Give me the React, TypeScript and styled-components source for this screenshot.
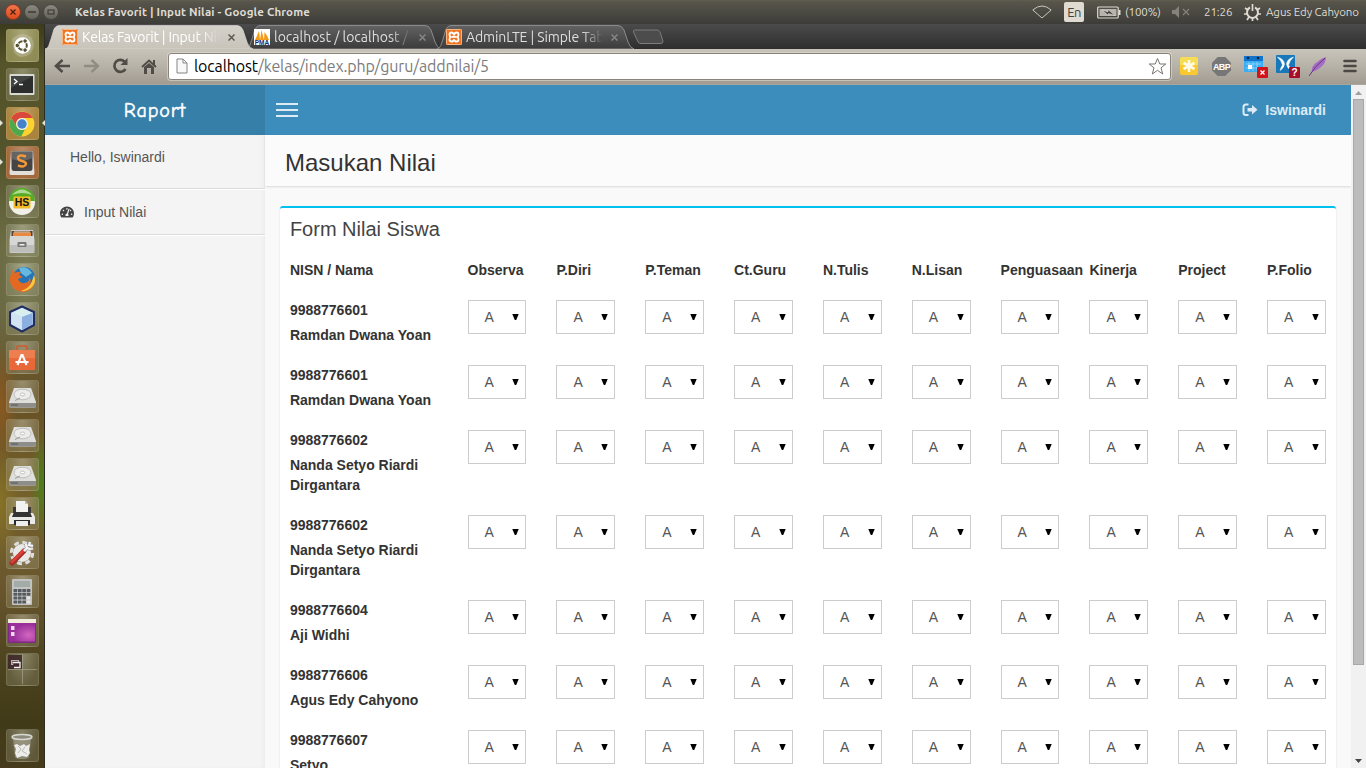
import React from "react";
import styled, { createGlobalStyle, css } from "styled-components";
import { FaTachometerAlt } from "react-icons/fa";

const GlobalStyle = createGlobalStyle`
  * { box-sizing: border-box; }
  body { margin: 0; overflow: hidden; font-family: "Liberation Sans", Arial, sans-serif; font-size: 14px; line-height: 20px; color: #333; }
  svg { display: block; flex: none; }
`;

const uiFont = css`font-family: Ubuntu, "Noto Sans", "Open Sans", sans-serif;`;

const Desktop = styled.div`
  width: 1366px; height: 768px; overflow: hidden;
  display: flex; flex-direction: column;
`;

/* ---------- system panel ---------- */
const Panel = styled.header`
  ${uiFont}
  flex: none; height: 24px; display: flex; align-items: center; padding-left: 5px;
  background: linear-gradient(#605e50 0, #57554b 2px, #3d3c38 24px);
  color: #dfdbd2; font-size: 12px;
`;
const WindowButton = styled.span<{ $close?: boolean }>`
  width: 16px; height: 16px; margin-right: 3px; border-radius: 50%;
  display: grid; place-items: center;
  border: 1px solid ${p => (p.$close ? "#8f3b20" : "#494841")};
  background: ${p => (p.$close ? "linear-gradient(#f4764d,#df4a1c)" : "linear-gradient(#8b897f,#64625a)")};
`;
const WindowTitle = styled.span`
  margin-left: 13px; font-weight: 700; font-size: 11.5px; letter-spacing: 0.16px; white-space: nowrap; flex: 1;
`;
const Tray = styled.div`display: flex; align-items: center; white-space: nowrap;`;
const Lang = styled.span`
  width: 20px; height: 20px; margin: 0 13px 0 12px; border-radius: 2px; background: #dfdbd2; color: #43423d;
  font-size: 13px; line-height: 21px; text-align: center; letter-spacing: -0.6px;
`;
const TrayText = styled.span<{ $w: number; $ml: number }>`
  width: ${p => p.$w}px; margin-left: ${p => p.$ml}px; font-size: 11.5px; letter-spacing: -0.1px;
`;

/* ---------- launcher ---------- */
const Body = styled.div`flex: 1; min-height: 0; display: flex;`;
const Launcher = styled.nav`
  flex: none; width: 45px; padding: 5px 0 6px 5.5px; display: flex; flex-direction: column; gap: 6px;
  border-right: 1px solid #2c2c20;
  background:
    radial-gradient(ellipse 14px 55px at 100% 460px, rgba(62,140,20,.75), transparent),
    radial-gradient(ellipse 18px 60px at 0 380px, rgba(150,92,32,.75), transparent),
    radial-gradient(ellipse 20px 60px at 0 480px, rgba(139,118,38,.8), transparent),
    radial-gradient(ellipse 24px 70px at 60% 250px, rgba(134,136,96,.7), transparent),
    linear-gradient(#3c3b1c 0, #565429 40px, #53532c 130px, #6c6c45 220px, #6b6a44 290px, #665025 370px, #74602a 470px, #6b572e 560px, #4c431f 640px, #413a18 700px, #463b1b);
`;
const Tile = styled.div<{ $tint?: string; $left?: boolean; $right?: boolean }>`
  position: relative; flex: none; width: 33px; height: 33px; border-radius: 3px; display: grid; place-items: center;
  border: 1px solid rgba(225,225,190,.13);
  background: radial-gradient(ellipse at 50% 0, rgba(255,255,245,.28), rgba(255,255,245,.06) 75%), ${p => p.$tint || "rgba(150,148,120,.22)"};
  ${p => p.$left && css`&::before { content: ""; position: absolute; left: -7px; top: 12px; border: 3px solid transparent; border-left-color: #e3e3dc; border-right: 0; }`}
  ${p => p.$right && css`&::after { content: ""; position: absolute; right: -7px; top: 12px; border: 3px solid transparent; border-right-color: #e3e3dc; border-left: 0; }`}
`;
const Spacer = styled.div`flex: 1;`;

/* ---------- browser ---------- */
const Browser = styled.main`flex: 1; min-width: 0; display: flex; flex-direction: column;`;
const TabStrip = styled.div`
  ${uiFont}
  flex: none; height: 25px; display: flex; align-items: flex-end; background: linear-gradient(#4b4b4b, #2e2e2e);
`;
const Tab = styled.div<{ $w: number; $active?: boolean; $pad: number; $end: number; $ml?: number }>`
  position: relative; z-index: ${p => (p.$active ? 2 : 1)};
  width: ${p => p.$w}px; height: 25px; margin-left: ${p => p.$ml || 0}px; padding: 1px ${p => p.$end}px 0 ${p => p.$pad}px;
  display: flex; align-items: center; color: ${p => (p.$active ? "#fff" : "#dedede")};
`;
const TabShape = styled.svg`position: absolute; left: 0; top: 0; z-index: -1;`;
const TabTitle = styled.span<{ $ls: number }>`
  flex: 1; min-width: 0; margin-left: 4px; margin-right: 8px; overflow: hidden; white-space: nowrap;
  font-size: 14px; line-height: 22px; letter-spacing: ${p => p.$ls}px;
  -webkit-mask-image: linear-gradient(90deg, #000 85%, transparent 100%);
  mask-image: linear-gradient(90deg, #000 85%, transparent 100%);
`;
const NewTab = styled.svg`margin-left: -2px;`;
const Toolbar = styled.div`
  ${uiFont}
  flex: none; height: 36px; display: flex; align-items: center; padding: 0 8px 1px 9px;
  background: linear-gradient(#c8c4ba, #b7b2a8 50%, #a19b91); border-bottom: 1px solid #aaa69d;
`;
const NavIcons = styled.div`display: flex; align-items: center; gap: 12px; width: 114px;`;
const UrlBox = styled.div`
  width: 1003px; height: 27px; display: flex; align-items: center; padding: 0 3px 0 7px;
  background: #fff; border: 1px solid #88847c; border-radius: 3px; box-shadow: 0 0 0 1px rgba(225,222,214,.55);
`;
const Url = styled.span`
  flex: 1; margin-left: 6px; font-size: 16px; line-height: 24px; letter-spacing: -0.13px; color: #7c7c7c;
  b { font-weight: 400; color: #000; }
`;
const Extensions = styled.div`display: flex; align-items: center; margin-left: 9px;`;
const Extension = styled.span<{ $w: number }>`width: ${p => p.$w}px; flex: none;`;

/* ---------- page ---------- */
const Viewport = styled.div`flex: 1; min-height: 0; display: flex; background: #f9f9f9;`;
const Page = styled.div`flex: 1; min-width: 0; display: flex; flex-direction: column; overflow: hidden;`;
const TopNav = styled.div`flex: none; height: 50px; display: flex; background: #3c8dbc;`;
const Brand = styled.div`
  width: 220px; background: #367fa9; color: #fff; text-align: center; line-height: 52px; font-size: 20px;
  font-family: Kaushan, "Comic Neue", "Comic Sans MS", cursive;
  span { letter-spacing: .9px; -webkit-text-stroke: .5px #fff; }
`;
const Burger = styled.div`
  width: 22px; margin: 18px 0 0 11px; height: 14px; display: flex; flex-direction: column; justify-content: space-between;
  i { height: 2px; background: #dcebf4; }
`;
const User = styled.div`
  margin-left: auto; margin-right: 25px; display: flex; align-items: center; gap: 7px;
  color: #dcebf4; font-weight: 700;
`;
const Columns = styled.div`flex: 1; min-height: 0; display: flex;`;
const Sidebar = styled.aside`
  flex: none; width: 220px; background: #f4f4f4; color: #555; box-shadow: inset -3px 0 6px -3px rgba(0,0,0,.06);
`;
const Hello = styled.div`height: 54px; padding: 12px 25px; border-bottom: 1px solid #dbdbdb;`;
const MenuItem = styled.div`
  height: 46px; border-top: 1px solid #fff; border-bottom: 1px solid #dbdbdb; box-shadow: 0 1px 0 #fff;
  display: flex; align-items: center; padding: 0 0 1px 15px; gap: 10px; svg { color: #444; }
`;
const Content = styled.section`flex: 1; min-width: 0;`;
const ContentHeader = styled.h1`
  margin: 0; height: 51px; padding: 15px 20px; background: #fbfbfb; color: #333;
  font-size: 24px; line-height: 26px; font-weight: 400; box-shadow: 0 1px 2px rgba(0,0,0,.13);
`;
const Card = styled.div`
  margin: 20px 15px 0 14.5px; height: 900px; padding: 0 10.1px 0 10.4px; background: #fff; border-radius: 3px;
  border-top: 2px solid #00c0ef; box-shadow: 0 1px 2px rgba(0,0,0,.12);
`;
const CardTitle = styled.h3`margin: 0; padding: 10px 0; font-size: 20px; line-height: 22px; font-weight: 400; color: #444; height: 52px;`;
const Row = styled.div`
  display: grid; grid-template-columns: 2fr repeat(10, 1fr); margin: 0 -15px 15px; font-weight: 700;
`;
const Cell = styled.div`padding: 0 15px; min-width: 0; white-space: nowrap;`;
const NameCell = styled.div`padding: 0 15px;`;
const Label = styled.div`margin-bottom: 5px;`;
const Select = styled.div`
  height: 34px; border: 1px solid #ccc; background: #fff; color: #555; font-weight: 400;
  display: flex; align-items: center; justify-content: space-between; padding: 0 6px 0 16px;
`;
const Scrollbar = styled.div`
  flex: none; width: 15px; background: #f1f1f1; display: flex; flex-direction: column; align-items: center; justify-content: space-between; padding: 6px 0 5px;
`;
const Thumb = styled.div`width: 11px; height: 566px; background: #bcbcbc; border: 1px solid #a8a8a8; margin: 4px 0 auto;`;

const Ubuntu = () => (
  <svg width="27" height="27" viewBox="0 0 27 27">
    <path d="M3 7Q13-2 22 5Q28 13 21 22Q11 29 5 20" fill="#fff" opacity=".2" />
    <circle cx="13.5" cy="13.5" r="8.3" fill="#fff" />
    <circle cx="13.5" cy="13.5" r="4.3" fill="none" stroke="#54502d" strokeWidth="2" />
    {[60, 180, 300].map(a => (
      <g key={a} transform={`rotate(${a} 13.5 13.5)`}>
        <circle cx="18.7" cy="13.5" r="2.2" fill="#54502d" stroke="#fff" strokeWidth=".9" />
      </g>
    ))}
  </svg>
);
const Terminal = () => (
  <svg width="26" height="23" viewBox="0 0 26 23">
    <rect x=".5" y="1" width="25" height="21" rx="1" fill="#d8d8d4" />
    <rect x="2" y="3" width="22" height="17" fill="#2c2d2d" />
    <path d="M2 3H24L2 15Z" fill="#555" opacity=".55" />
    <path d="M5 6l3 2.5L5 11M10 11.5h4" fill="none" stroke="#fff" strokeWidth="1.3" />
  </svg>
);
const Chrome = () => (
  <svg width="26" height="26" viewBox="0 0 26 26">
    <circle cx="13" cy="13" r="12.4" fill="#fbd22f" />
    <path d="M2.3 6.8A12.4 12.4 0 0 1 23.8 7H13A6 6 0 0 0 7.8 16Z" fill="#d9483b" />
    <path d="M2.3 6.8L7.8 16A6 6 0 0 0 16 18.2L12.2 25.4A12.4 12.4 0 0 1 2.3 6.8Z" fill="#4fa84c" />
    <circle cx="13" cy="13" r="5.9" fill="#eef2f4" /><circle cx="13" cy="13" r="4.7" fill="#4682cc" />
  </svg>
);
const Sublime = () => (
  <svg width="26" height="26" viewBox="0 0 26 26">
    <path d="M2 2Q2 1 3 1H23Q24 1 24 2L25.5 23Q25.5 25 24 25H2Q.5 25 .5 23Z" fill="#e2dfda" />
    <path d="M2.5 1.5H23.5V18Q23.5 21 21 21H5Q2.5 21 2.5 18Z" fill="#444" />
    <path d="M2.5 1.5H23.5V8Q14 13 2.5 9Z" fill="#777" opacity=".65" />
    <path d="M17 6.5Q9 4 9 8Q9 10 13 11Q17 12 17 14Q16 18 9 15.5" fill="none" stroke="#f49838" strokeWidth="2.5" />
  </svg>
);
const Heidi = () => (
  <svg width="28" height="28" viewBox="0 0 28 28">
    <circle cx="14" cy="14" r="13" fill="#f0f0e9" />
    <path d="M1 13A13 13 0 0 1 27 13Z" fill="#55ad26" />
    <path d="M4 7Q14-4 24 7Q14 3 4 7Z" fill="#d5ecc5" opacity=".7" />
    <rect x="5.5" y="8.5" width="17" height="12" rx="1" fill="#f3ba29" />
    <text x="14" y="18.2" textAnchor="middle" fontFamily="Liberation Sans" fontWeight="700" fontSize="10.5" fill="#151515">HS</text>
  </svg>
);
const Files = () => (
  <svg width="26" height="26" viewBox="0 0 26 26">
    <path d="M2 2H24L25.5 12V24Q25.5 25 24 25H2Q.5 25 .5 24V12Z" fill="#c9c9c7" />
    <rect x="2.5" y="3" width="21" height="5" fill="#5b4230" /><path d="M4 4.5H22V8H4Z" fill="#e9893f" /><path d="M5 4H21" stroke="#f7dfc4" />
    <path d="M1 8H25V24H1Z" fill="#d6d6d4" /><path d="M1 17H25V24H1Z" fill="#bdbdbb" />
    <rect x="8.5" y="14" width="9" height="5" rx="1" fill="#777" /><rect x="10.5" y="16" width="5" height="1.5" fill="#eee" />
  </svg>
);
const Firefox = () => (
  <svg width="27" height="27" viewBox="0 0 27 27">
    <circle cx="15" cy="12" r="11" fill="#2474b6" /><path d="M10 2Q18-1 23 7L17 11L12 7Z" fill="#66b8df" />
    <path d="M3 4L6 7Q9 5 12 6L10 9L14 11L9 13Q11 18 16 17Q21 16 20 11Q23 14 21 18Q25 15 25 9Q28 17 23 22Q17 28 9 25Q0 21 1 12Z" fill="#e36822" />
    <path d="M25 9Q28 17 22 22Q16 26 12 25Q21 22 23 15Z" fill="#f8c63f" />
  </svg>
);
const Cube = () => (
  <svg width="28" height="28" viewBox="0 0 28 28">
    <path d="M14 1.5L26 7V20L14 26.5L2 20V7Z" fill="#b8d4ec" stroke="#222d62" strokeWidth="2" strokeLinejoin="round" />
    <path d="M3.5 8L14 3L24.5 8L14 12Z" fill="#d9eeef" /><path d="M14 12L24.5 8V19L14 25Z" fill="#8aafe0" />
    <path d="M3.5 8L14 12V25L3.5 19Z" fill="#d3e3f3" />
  </svg>
);
const Software = () => (
  <svg width="28" height="28" viewBox="0 0 28 28">
    <path d="M9 7V3Q9 2 10 2H18Q19 2 19 3V7" fill="none" stroke="#cf5a31" strokeWidth="1.6" />
    <path d="M1 6H27V25Q27 26 26 26H2Q1 26 1 25Z" fill="#e8683a" /><path d="M1 6H27V14H1Z" fill="#f08d5f" opacity=".6" />
    <path d="M9.5 21L13.5 11H14.5L18.5 21M7.5 18H20.5" fill="none" stroke="#fff" strokeWidth="2.1" />
  </svg>
);
const Disk = () => (
  <svg width="29" height="24" viewBox="0 0 29 24">
    <path d="M6 3H23L28 17V21Q28 22.5 26 22.5H3Q1 22.5 1 21V17Z" fill="#dededc" />
    <path d="M1 18H28V21Q28 22.5 26 22.5H3Q1 22.5 1 21Z" fill="#8d8d8b" />
    <ellipse cx="14.5" cy="9.5" rx="8.5" ry="5.3" fill="#ececea" stroke="#bdbdba" />
    <ellipse cx="14.5" cy="9.5" rx="2.2" ry="1.4" fill="#fff" stroke="#aaa" strokeWidth=".7" />
    <path d="M7 15.5L12 13" stroke="#999" /><path d="M3 20h7" stroke="#555" />
  </svg>
);
const Printer = () => (
  <svg width="28" height="28" viewBox="0 0 28 28">
    <path d="M5 7H23V16H5Z" fill="#393939" /><path d="M8 1H17L20 4V12H8Z" fill="#f2f2f0" /><path d="M17 1V4H20" fill="#bbb" />
    <path d="M3 13H25L27 17V24H1V17Z" fill="#e9e9e7" /><path d="M6 12H22L24 17H4Z" fill="#333" />
    <path d="M6 20H22V25H6Z" fill="#2b2b2b" /><path d="M8 21H20V26H8Z" fill="#eee" />
  </svg>
);
const Tools = () => (
  <svg width="28" height="28" viewBox="0 0 28 28">
    <circle cx="14" cy="14" r="10.7" fill="none" stroke="#dedede" strokeWidth="3" strokeDasharray="4.8 3.6" />
    <circle cx="14" cy="14" r="9" fill="#e9e9e7" />
    <path d="M4 24L16 12" stroke="#9d2f28" strokeWidth="5" strokeLinecap="round" /><path d="M4 23L15 12" stroke="#dc4036" strokeWidth="3" strokeLinecap="round" />
    <path d="M16 12L20 8M18 5Q18 10 23 10M22 3L21 6L25 7" fill="none" stroke="#999" strokeWidth="3.5" />
    <path d="M16 12L20 8M18 5Q18 10 23 10M22 3L21 6L25 7" fill="none" stroke="#f5f5f5" strokeWidth="2.2" />
  </svg>
);
const Calculator = () => (
  <svg width="22" height="26" viewBox="0 0 22 26">
    <rect x="1" width="20" height="26" rx="1" fill="#c3c4c1" /><rect x="3" y="2" width="16" height="6" fill="#a3aca9" />
    {[0, 1, 2, 3].map(r => [0, 1, 2, 3].map(c => (
      <rect key={`${r}${c}`} x={2.5 + c * 4.4} y={10 + r * 3.8} width="3.7" height="3" rx=".5" fill={c === 3 && r > 1 ? "#e5e5e5" : "#555b60"} />
    )))}
  </svg>
);
const Screenshot = () => (
  <svg width="28" height="24" viewBox="0 0 28 24">
    <defs>
      <radialGradient id="shot" cx=".75" cy=".65" r=".6"><stop stopColor="#d267c0" /><stop offset="1" stopColor="#9a2f9b" /></radialGradient>
    </defs>
    <rect width="28" height="24" rx="1" fill="#7e2a80" /><rect width="28" height="4" fill="#f0eddc" />
    <rect x="1" y="4" width="26" height="18.500" fill="url(#shot)" />
    <rect x="3" y="7" width="3.500" height="4" fill="#f4d8ef" /><rect x="3" y="13" width="3.500" height="4" fill="#f4d8ef" />
  </svg>
);
const Workspaces = () => (
  <svg width="29" height="29" viewBox="0 0 29 29">
    <rect width="14" height="14" fill="#3c2327" opacity=".85" />
    <path d="M14.500 0V29M0 14.500H29" stroke="#aaa894" opacity=".65" /><rect x="3.500" y="5.500" width="7" height="4" fill="none" stroke="#b9b2b2" />
    <path d="M5 8.500V7.500H12V12.500H6" fill="#41282d" stroke="#f4efef" strokeWidth="1.300" />
  </svg>
);
const Trash = () => (
  <svg width="24" height="28" viewBox="0 0 24 28">
    <path d="M3 6H21L19 25Q18 27 12 27Q6 27 5 25Z" fill="#babab0" opacity=".45" />
    <ellipse cx="12" cy="5" rx="10" ry="2.500" fill="#8d8c7c" stroke="#d8d8d2" strokeWidth="1.400" />
    <path d="M4 13L7 12L10 14L14 12L16 14L20 12L19 18L20 21L17 25L12 24L7 26L5 21L6 17Z" fill="#ececea" />
    <path d="M8 14L11 17L8 21M15 15L12 19L17 22" fill="none" stroke="#bcbcb4" />
  </svg>
);

const Xampp = () => (
  <svg width="16" height="16" viewBox="0 0 16 16">
    <rect width="16" height="16" rx="1" fill="#f07423" /><rect x=".5" y=".5" width="15" height="15" rx="1" fill="none" stroke="#f9b47f" />
    <path d="M5.500 3.500Q3.500 3.500 3.500 5.500Q3.500 7.500 5 8Q3.500 8.500 3.500 10.500Q3.500 12.500 5.500 12.500H6.500L8 11L9.500 12.500H10.500Q12.500 12.500 12.500 10.500Q12.500 8.500 11 8Q12.500 7.500 12.500 5.500Q12.500 3.500 10.500 3.500Q9 3.500 8 5.500Q7 3.500 5.500 3.500ZM6 7.800H10" fill="none" stroke="#fff" strokeWidth="1.800" />
  </svg>
);
const PhpMyAdmin = () => (
  <svg width="16" height="16" viewBox="0 0 16 16">
    <rect width="16" height="16" fill="#fff" /><path d="M1 11Q3 7 5 2L6 11ZM6 11L7.500 1Q9 7 10 11ZM10 11L10.500 3Q13 6 15 11Z" fill="#f49a14" />
    <text x="8" y="15.700" textAnchor="middle" fontFamily="Liberation Sans" fontWeight="700" fontSize="6.500" fill="#26266b">PMA</text>
  </svg>
);
const CloseX = ({ color }: { color: string }) => (
  <svg width="7" height="7" viewBox="0 0 7 7"><path d="M.5.5l6 6M6.500.5l-6 6" stroke={color} strokeWidth="1.500" /></svg>
);
const TabBackground = ({ w, active }: { w: number; active?: boolean }) => (
  <TabShape width={w} height="25" viewBox={`0 0 ${w} 25`}>
    <defs>
      <linearGradient id={active ? "tabOn" : "tabOff"} x2="0" y2="1">
        <stop stopColor={active ? "#d4d1ca" : "#626262"} /><stop offset="1" stopColor={active ? "#c8c4ba" : "#3b3b3b"} />
      </linearGradient>
    </defs>
    <path
      d={`M0 25C4 24 4 20 6 15L9 5Q11 1.500 14 1.500H${w - 16}Q${w - 12} 1.500 ${w - 10} 6L${w - 6} 18Q${w - 4} 24 ${w} 25Z`}
      fill={`url(#${active ? "tabOn" : "tabOff"})`} stroke={active ? "#e2dfd8" : "#8a8a8a"} strokeWidth={active ? 0.6 : 1}
    />
  </TabShape>
);

const columns = ["Observa", "P.Diri", "P.Teman", "Ct.Guru", "N.Tulis", "N.Lisan", "Penguasaan", "Kinerja", "Project", "P.Folio"];
const students = [
  ["9988776601", "Ramdan Dwana Yoan"], ["9988776601", "Ramdan Dwana Yoan"],
  ["9988776602", "Nanda Setyo Riardi Dirgantara"], ["9988776602", "Nanda Setyo Riardi Dirgantara"],
  ["9988776604", "Aji Widhi"], ["9988776606", "Agus Edy Cahyono"], ["9988776607", "Setyo"],
];

const GradeSelect = () => (
  <Select>A<svg width="7" height="6" viewBox="0 0 7 6"><path d="M.3 0H6.700L4.200 6H2.800Z" fill="#000" /></svg></Select>
);

export default function App() {
  return (
    <Desktop>
      <GlobalStyle />
      <Panel>
        <WindowButton $close><svg width="6" height="6" viewBox="0 0 6 6"><path d="M.5.5l5 5M5.500.5l-5 5" stroke="#46200f" strokeWidth="1.300" /></svg></WindowButton>
        <WindowButton><svg width="8" height="2"><path d="M0 1H8" stroke="#36352f" strokeWidth="1.400" /></svg></WindowButton>
        <WindowButton><svg width="8" height="6"><rect x="1" y="1" width="6" height="4" fill="none" stroke="#36352f" /></svg></WindowButton>
        <WindowTitle>Kelas Favorit | Input Nilai - Google Chrome</WindowTitle>
        <Tray>
          <svg width="20" height="14" viewBox="0 0 20 14"><path d="M.8 5Q10-3 19.200 5L10 13Z" fill="none" stroke="#c9c6bd" /></svg>
          <Lang>En</Lang>
          <svg width="24" height="13" viewBox="0 0 24 13">
            <rect x=".7" y="1" width="20.500" height="11" rx="1" fill="none" stroke="#dfdbd2" strokeWidth="1.200" /><rect x="2.500" y="3" width="17" height="7" fill="#b7b4ab" />
            <path d="M22.500 4V9" stroke="#dfdbd2" strokeWidth="2" /><path d="M5 4L11 6L11 3.500L18 9.500L11.500 7.500V9.500Z" fill="#3f3e39" stroke="#eee" strokeWidth=".5" />
          </svg>
          <TrayText $w={47} $ml={4}>(100%)</TrayText>
          <svg width="18" height="12" viewBox="0 0 18 12"><path d="M0 4H3L7 0V12L3 8H0Z" fill="#858279" /><path d="M11 3l6 6M17 3l-6 6" stroke="#858279" strokeWidth="1.300" /></svg>
          <TrayText $w={40} $ml={14}>21:26</TrayText>
          <svg width="17" height="17" viewBox="0 0 17 17">
            <path d="M6 3.500A5.500 5.500 0 1 0 11 3.500" fill="none" stroke="#dfdbd2" strokeWidth="2" />
            <path d="M8.500 0V7M1 4L4 6M16 4L13 6M0 10H3M14 10H17M3 16L5 13M14 16L12 13M8.500 14V17" stroke="#dfdbd2" strokeWidth="1.700" />
          </svg>
          <TrayText $w={100} $ml={5}>Agus Edy Cahyono</TrayText>
        </Tray>
      </Panel>
      <Body>
        <Launcher>
          <Tile $tint="#89854b"><Ubuntu /></Tile>
          <Tile><Terminal /></Tile>
          <Tile $tint="#a47c32" $left $right><Chrome /></Tile>
          <Tile $tint="#9d6030" $left><Sublime /></Tile>
          <Tile><Heidi /></Tile>
          <Tile><Files /></Tile>
          <Tile><Firefox /></Tile>
          <Tile><Cube /></Tile>
          <Tile><Software /></Tile>
          <Tile><Disk /></Tile>
          <Tile><Disk /></Tile>
          <Tile><Disk /></Tile>
          <Tile><Printer /></Tile>
          <Tile><Tools /></Tile>
          <Tile><Calculator /></Tile>
          <Tile><Screenshot /></Tile>
          <Tile><Workspaces /></Tile>
          <Spacer />
          <Tile><Trash /></Tile>
        </Launcher>
        <Browser>
          <TabStrip>
            <Tab $w={208} $active $pad={17} $end={18}><TabBackground w={208} active /><Xampp /><TabTitle $ls={-0.2}>Kelas Favorit | Input Nilai</TabTitle><CloseX color="#5c5953" /></Tab>
            <Tab $w={195} $ml={-7} $pad={8} $end={15}><TabBackground w={195} /><PhpMyAdmin /><TabTitle $ls={0}>localhost / localhost / kelas</TabTitle><CloseX color="#858585" /></Tab>
            <Tab $w={197} $ml={-4} $pad={9} $end={16}><TabBackground w={197} /><Xampp /><TabTitle $ls={-0.1}>AdminLTE | Simple Tables</TabTitle><CloseX color="#858585" /></Tab>
            <NewTab width="32" height="20" viewBox="0 0 32 20"><path d="M3 1H25Q27 1 28 3L31 12Q31 14.500 29 14.500H9Q7 14.500 6 13L1.500 3Q1 1 3 1Z" fill="#4c4c4c" stroke="#7c7c7c" /></NewTab>
          </TabStrip>
          <Toolbar>
            <NavIcons>
              <svg width="17" height="14" viewBox="0 0 17 14"><path d="M16 7H3M8.500 1L2 7L8.500 13" fill="none" stroke="#504d48" strokeWidth="2.600" /></svg>
              <svg width="17" height="14" viewBox="0 0 17 14"><path d="M1 7H14M8.500 1L15 7L8.500 13" fill="none" stroke="#918d84" strokeWidth="2.400" /></svg>
              <svg width="17" height="16" viewBox="0 0 17 16"><path d="M13 4A6 6 0 1 0 13.500 11" fill="none" stroke="#504d48" strokeWidth="2.700" /><path d="M15.500 0V7H8.500Z" fill="#504d48" /></svg>
              <svg width="16" height="15" viewBox="0 0 16 15"><path d="M1 8L8 1.500L15 8" fill="none" stroke="#504d48" strokeWidth="2" /><path d="M12 1h2v5h-2ZM3 8L8 4L13 8V15H10V9H6V15H3Z" fill="#504d48" /></svg>
            </NavIcons>
            <UrlBox>
              <svg width="12" height="16" viewBox="0 0 12 16"><path d="M1 1H7L11 5V15H1Z M7 1V5H11" fill="#f8f8f8" stroke="#858585" /></svg>
              <Url><b>localhost</b>/kelas/index.php/guru/addnilai/5</Url>
              <svg width="19" height="19" viewBox="0 0 19 19"><path d="M9.500 1.500L11.800 7H17.800L13 10.800L14.700 17L9.500 13.300L4.300 17L6 10.800L1.200 7H7.200Z" fill="#fff" stroke="#77746f" strokeLinejoin="round" /></svg>
            </UrlBox>
            <Extensions>
              <Extension $w={32}><svg width="18" height="18" viewBox="0 0 18 18"><rect width="18" height="18" rx="2" fill="#f9c92f" /><path d="M0 2Q0 0 2 0H16Q18 0 18 2V8H0Z" fill="#f6dd55" /><path d="M9 3V15M3.500 6L14.500 12M14.500 6L3.500 12" stroke="#fffbe8" strokeWidth="2.600" /></svg></Extension>
              <Extension $w={32}><svg width="19" height="19" viewBox="0 0 20 20"><path d="M6 0H14L20 6V14L14 20H6L0 14V6Z" fill="#777" /><text x="10" y="13.500" textAnchor="middle" fontFamily="Liberation Sans" fontWeight="700" fontSize="9.500" letterSpacing="-.7" fill="#fff">ABP</text></svg></Extension>
              <Extension $w={32}><svg width="24" height="24" viewBox="0 0 24 24"><rect y="2" width="19" height="16" rx="1" fill="#3aaef4" /><rect y="2" width="19" height="5" fill="#1174ca" /><circle cx="4" cy="4" r="1.300" fill="#102847" /><circle cx="14" cy="4" r="1.300" fill="#102847" /><path d="M2 10H17M2 14H17M5 8V17M9 8V17M13 8V17" stroke="#a3dcff" strokeWidth=".7" /><rect x="4" y="11" width="4" height="4" fill="#fff" /><rect x="13" y="13" width="11" height="11" rx="1" fill="#d3131a" /><path d="M16.500 16.500l4 4M20.500 16.500l-4 4" stroke="#fff" strokeWidth="1.300" /></svg></Extension>
              <Extension $w={33}><svg width="24" height="24" viewBox="0 0 24 24"><rect y="1" width="19" height="18" rx="1" fill="#1878b9" /><path d="M1.500 3Q8 5 8.500 10Q8 14 4 16.500Q5 13 6.500 11Q5 6 1.500 3ZM17.500 3Q11 5 10.500 10Q11 14 15 16.500Q14 13 12.500 11Q14 6 17.500 3Z" fill="#fff" stroke="#fff" strokeWidth=".5" /><rect x="13" y="13" width="11" height="11" rx="1" fill="#a70e29" /><text x="18.500" y="22" textAnchor="middle" fontFamily="Liberation Sans" fontWeight="700" fontSize="10" fill="#fff">?</text></svg></Extension>
              <Extension $w={34}><svg width="18" height="19" viewBox="0 0 18 19"><path d="M3 15Q2 9 8 5Q12 1.500 17 0Q17 6 12 10Q8 14 3 15Z" fill="#a56cc4" /><path d="M0 19Q5 10 16 1" fill="none" stroke="#653280" /></svg></Extension>
              <svg width="14" height="14" viewBox="0 0 14 14"><path d="M1.500 2H12.500M1.500 7H12.500M1.500 12H12.500" stroke="#4b4843" strokeWidth="2.600" strokeLinecap="round" /></svg>
            </Extensions>
          </Toolbar>
          <Viewport>
            <Page>
              <TopNav>
                <Brand><span>Raport</span></Brand>
                <Burger><i /><i /><i /></Burger>
                <User>
                  <svg width="16" height="14" viewBox="0 0 16 14"><path d="M6.500 1.500H4Q1.500 1.500 1.500 4V9.500Q1.500 12 4 12H6.500" fill="none" stroke="#dcebf4" strokeWidth="2" /><path d="M5.500 5H10V2L15.500 6.800L10 11.500V8.500H5.500Z" fill="#dcebf4" /></svg>
                  Iswinardi
                </User>
              </TopNav>
              <Columns>
                <Sidebar>
                  <Hello>Hello, Iswinardi</Hello>
                  <MenuItem><FaTachometerAlt size={14} />Input Nilai</MenuItem>
                </Sidebar>
                <Content>
                  <ContentHeader>Masukan Nilai</ContentHeader>
                  <Card>
                    <CardTitle>Form Nilai Siswa</CardTitle>
                    <Row>
                      <NameCell><Label>NISN / Nama</Label></NameCell>
                      {columns.map(c => <Cell key={c}>{c}</Cell>)}
                    </Row>
                    {students.map(([id, name], i) => (
                      <Row key={i}>
                        <NameCell><Label>{id}</Label><Label>{name}</Label></NameCell>
                        {columns.map(c => <Cell key={c}><GradeSelect /></Cell>)}
                      </Row>
                    ))}
                  </Card>
                </Content>
              </Columns>
            </Page>
            <Scrollbar>
              <svg width="7" height="4" viewBox="0 0 7 4"><path d="M0 4L3.500 0L7 4Z" fill="#a0a0a0" /></svg>
              <Thumb />
              <svg width="7" height="4" viewBox="0 0 7 4"><path d="M0 0L3.500 4L7 0Z" fill="#444" /></svg>
            </Scrollbar>
          </Viewport>
        </Browser>
      </Body>
    </Desktop>
  );
}
